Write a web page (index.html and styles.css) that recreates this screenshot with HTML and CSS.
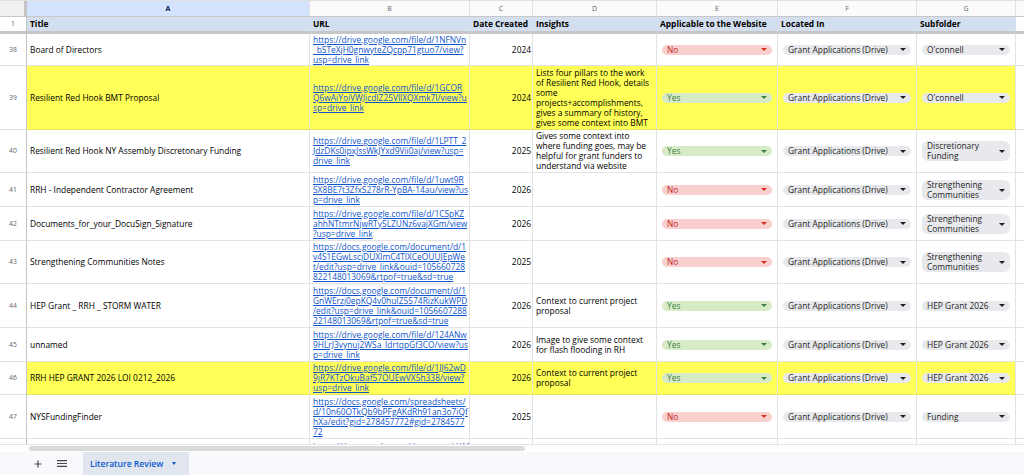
FILE: index.html
```html
<!DOCTYPE html>
<html lang="en">
<head>
<meta charset="utf-8">
<title>Literature Review</title>
<link rel="stylesheet" href="styles.css">
</head>
<body>
<main class="sheet">
  <div class="row letters">
    <div class="cell corner"></div>
    <div class="cell sel">A</div>
    <div class="cell">B</div>
    <div class="cell">C</div>
    <div class="cell">D</div>
    <div class="cell">E</div>
    <div class="cell">F</div>
    <div class="cell">G</div>
    <div class="cell"></div>
  </div>

  <div class="row head">
    <div class="cell rn">1</div>
    <div class="cell">Title</div>
    <div class="cell">URL</div>
    <div class="cell">Date Created</div>
    <div class="cell">Insights</div>
    <div class="cell">Applicable to the Website</div>
    <div class="cell">Located In</div>
    <div class="cell">Subfolder</div>
    <div class="cell blank"></div>
  </div>

  <div class="row h32">
    <div class="cell rn">38</div>
    <div class="cell">Board of Directors</div>
    <div class="cell"><a href="#">https://drive.google.com/file/d/1NFNVn<br>_bSTeXjH0gnwyteZQcpp71gtuo7/view?<br>usp=drive_link</a></div>
    <div class="cell num">2024</div>
    <div class="cell"></div>
    <div class="cell chipcell"><span class="chip no">No<i class="caret"></i></span></div>
    <div class="cell chipcell"><span class="chip grey">Grant Applications (Drive)<i class="caret"></i></span></div>
    <div class="cell chipcell"><span class="chip grey">O'connell<i class="caret"></i></span></div>
    <div class="cell blank"></div>
  </div>

  <div class="row h64 hl">
    <div class="cell rn">39</div>
    <div class="cell">Resilient Red Hook BMT Proposal</div>
    <div class="cell"><a href="#">https://drive.google.com/file/d/1GCOR<br>Q6wAiYoiVWJicdIZ25VllXQXmk7l/view?u<br>sp=drive_link</a></div>
    <div class="cell num">2024</div>
    <div class="cell"><span>Lists four pillars to the work<br>of Resilient Red Hook, details<br>some<br>projects+accomplishments,<br>gives a summary of history,<br>gives some context into BMT</span></div>
    <div class="cell chipcell"><span class="chip yes">Yes<i class="caret"></i></span></div>
    <div class="cell chipcell"><span class="chip grey">Grant Applications (Drive)<i class="caret"></i></span></div>
    <div class="cell chipcell"><span class="chip grey">O'connell<i class="caret"></i></span></div>
    <div class="cell blank"></div>
  </div>

  <div class="row h43">
    <div class="cell rn">40</div>
    <div class="cell">Resilient Red Hook NY Assembly Discretonary Funding</div>
    <div class="cell"><a href="#">https://drive.google.com/file/d/1LPTT_2<br>JdzDKs0ipxJssWkJYxd9Vii0aj/view?usp=<br>drive_link</a></div>
    <div class="cell num">2025</div>
    <div class="cell"><span>Gives some context into<br>where funding goes, may be<br>helpful for grant funders to<br>understand via website</span></div>
    <div class="cell chipcell"><span class="chip yes">Yes<i class="caret"></i></span></div>
    <div class="cell chipcell"><span class="chip grey">Grant Applications (Drive)<i class="caret"></i></span></div>
    <div class="cell chipcell"><span class="chip grey tall">Discretionary<br>Funding<i class="caret"></i></span></div>
    <div class="cell blank"></div>
  </div>

  <div class="row h34">
    <div class="cell rn">41</div>
    <div class="cell">RRH - Independent Contractor Agreement</div>
    <div class="cell"><a href="#">https://drive.google.com/file/d/1uwt9R<br>SX8BE7t3ZfxS278rR-YpBA-14au/view?us<br>p=drive_link</a></div>
    <div class="cell num">2026</div>
    <div class="cell"></div>
    <div class="cell chipcell"><span class="chip no">No<i class="caret"></i></span></div>
    <div class="cell chipcell"><span class="chip grey">Grant Applications (Drive)<i class="caret"></i></span></div>
    <div class="cell chipcell"><span class="chip grey tall">Strengthening<br>Communities<i class="caret"></i></span></div>
    <div class="cell blank"></div>
  </div>

  <div class="row h34">
    <div class="cell rn">42</div>
    <div class="cell">Documents_for_your_DocuSign_Signature</div>
    <div class="cell"><a href="#">https://drive.google.com/file/d/1CSpKZ<br>ahhNTtmrNjwRTy5LZUNz6vajXGm/view<br>?usp=drive_link</a></div>
    <div class="cell num">2026</div>
    <div class="cell"></div>
    <div class="cell chipcell"><span class="chip no">No<i class="caret"></i></span></div>
    <div class="cell chipcell"><span class="chip grey">Grant Applications (Drive)<i class="caret"></i></span></div>
    <div class="cell chipcell"><span class="chip grey tall">Strengthening<br>Communities<i class="caret"></i></span></div>
    <div class="cell blank"></div>
  </div>

  <div class="row h43">
    <div class="cell rn">43</div>
    <div class="cell">Strengthening Communities Notes</div>
    <div class="cell"><a href="#">https://docs.google.com/document/d/1<br>v4S1EGwLscjDUXImC4TlXCeOUUJEpWe<br>t/edit?usp=drive_link&amp;ouid=105660728<br>822148013069&amp;rtpof=true&amp;sd=true</a></div>
    <div class="cell num">2025</div>
    <div class="cell"></div>
    <div class="cell chipcell"><span class="chip no">No<i class="caret"></i></span></div>
    <div class="cell chipcell"><span class="chip grey">Grant Applications (Drive)<i class="caret"></i></span></div>
    <div class="cell chipcell"><span class="chip grey tall">Strengthening<br>Communities<i class="caret"></i></span></div>
    <div class="cell blank"></div>
  </div>

  <div class="row h44">
    <div class="cell rn">44</div>
    <div class="cell">HEP Grant _ RRH _ STORM WATER</div>
    <div class="cell"><a href="#">https://docs.google.com/document/d/1<br>GnWErzj0epKQ4v0huIZ5574RizKukWPD<br>/edit?usp=drive_link&amp;ouid=1056607288<br>22148013069&amp;rtpof=true&amp;sd=true</a></div>
    <div class="cell num">2026</div>
    <div class="cell"><span>Context to current project<br>proposal</span></div>
    <div class="cell chipcell"><span class="chip yes">Yes<i class="caret"></i></span></div>
    <div class="cell chipcell"><span class="chip grey">Grant Applications (Drive)<i class="caret"></i></span></div>
    <div class="cell chipcell"><span class="chip grey">HEP Grant 2026<i class="caret"></i></span></div>
    <div class="cell blank"></div>
  </div>

  <div class="row h34">
    <div class="cell rn">45</div>
    <div class="cell">unnamed</div>
    <div class="cell"><a href="#">https://drive.google.com/file/d/124ANw<br>9HLrJ3vynuj2WSa_IdrtqpGf3CO/view?us<br>p=drive_link</a></div>
    <div class="cell num">2026</div>
    <div class="cell"><span>Image to give some context<br>for flash flooding in RH</span></div>
    <div class="cell chipcell"><span class="chip yes">Yes<i class="caret"></i></span></div>
    <div class="cell chipcell"><span class="chip grey">Grant Applications (Drive)<i class="caret"></i></span></div>
    <div class="cell chipcell"><span class="chip grey">HEP Grant 2026<i class="caret"></i></span></div>
    <div class="cell blank"></div>
  </div>

  <div class="row h33 hl">
    <div class="cell rn">46</div>
    <div class="cell">RRH HEP GRANT 2026 LOI 0212_2026</div>
    <div class="cell"><a href="#">https://drive.google.com/file/d/1JJ62wD<br>9jR7KTzOkuBaf57OUEwVX5h338/view?<br>usp=drive_link</a></div>
    <div class="cell num">2026</div>
    <div class="cell"><span>Context to current project<br>proposal</span></div>
    <div class="cell chipcell"><span class="chip yes">Yes<i class="caret"></i></span></div>
    <div class="cell chipcell"><span class="chip grey">Grant Applications (Drive)<i class="caret"></i></span></div>
    <div class="cell chipcell"><span class="chip grey">HEP Grant 2026<i class="caret"></i></span></div>
    <div class="cell blank"></div>
  </div>

  <div class="row h44">
    <div class="cell rn">47</div>
    <div class="cell">NYSFundingFinder</div>
    <div class="cell"><a href="#">https://docs.google.com/spreadsheets/<br>d/10n60OTkQb9bPFgAKdRh91an3o7iQf<br>hXa/edit?gid=278457772#gid=2784577<br>72</a></div>
    <div class="cell num">2025</div>
    <div class="cell"></div>
    <div class="cell chipcell"><span class="chip no">No<i class="caret"></i></span></div>
    <div class="cell chipcell"><span class="chip grey">Grant Applications (Drive)<i class="caret"></i></span></div>
    <div class="cell chipcell"><span class="chip grey">Funding<i class="caret"></i></span></div>
    <div class="cell blank"></div>
  </div>

  <div class="row h44 partial">
    <div class="cell rn"></div>
    <div class="cell"></div>
    <div class="cell"><a href="#">https://docs.google.com/document/d/1f</a></div>
    <div class="cell num"></div>
    <div class="cell"></div>
    <div class="cell"></div>
    <div class="cell"></div>
    <div class="cell"></div>
    <div class="cell blank"></div>
  </div>
</main>

<div class="hscroll">
  <div class="hscroll-gutter"></div>
  <div class="hscroll-thumb"></div>
</div>

<footer class="tabbar">
  <button class="tb-btn" aria-label="Add sheet">
    <svg width="8" height="8" viewBox="0 0 8 8"><path d="M4 0.5v7M0.5 4h7" stroke="#444746" stroke-width="1.2" fill="none"/></svg>
  </button>
  <button class="tb-btn" aria-label="All sheets">
    <svg width="10" height="7" viewBox="0 0 10 7"><path d="M0 0.6h10M0 3.5h10M0 6.4h10" stroke="#444746" stroke-width="1.1" fill="none"/></svg>
  </button>
  <div class="tab">Literature Review<i class="tab-caret"></i></div>
</footer>
</body>
</html>
```

FILE: styles.css
```css
* { box-sizing: border-box; }

html, body {
  margin: 0;
  padding: 0;
  background: #ffffff;
}

body {
  width: 1024px;
  height: 475px;
  overflow: hidden;
  font-family: "Open Sans", "Liberation Sans", sans-serif;
  font-size: 8.4px;
  line-height: 10px;
  color: #000;
}

.sheet {
  height: 444px;
  overflow: hidden;
  border-top: 1px solid #e1e1e1;
}

.row {
  display: grid;
  grid-template-columns: 27px 283px 160px 63px 124px 121px 139px 99px 40px;
  width: 1056px;
}

.cell {
  display: flex;
  align-items: center;
  padding: 0 3px;
  overflow: hidden;
  white-space: nowrap;
  border-right: 1px solid #e2e2e2;
  border-bottom: 1px solid #e2e2e2;
}

.cell a {
  color: #1155cc;
  text-decoration: underline;
}

/* partially visible last row: its first text line peeks in at the bottom */
.partial .cell {
  align-items: flex-start;
  padding-top: 3px;
}

/* column letters */
.letters {
  height: 16px;
}
.letters .cell {
  justify-content: center;
  font-size: 7px;
  color: #5f6368;
  background: #fbfbfb;
  border-bottom: 1px solid #c8c8c8;
}
.letters .corner {
  background: #f1f1f1;
  border-right: 3px solid #c4c4c4;
}
.letters .sel {
  background: #d3e3fd;
  color: #041e49;
  font-weight: 700;
}

/* header row */
.head {
  height: 17px;
}
.head .cell {
  background: #d3dfee;
  font-weight: 700;
  border-bottom: 3px solid #c6c6c6;
  border-right-color: #d3dfee;
}
.head .cell.blank {
  background: #ffffff;
  border-right-color: #e2e2e2;
}
.head .rn {
  background: #ffffff;
  font-weight: 400;
  border-right: 1px solid #c4c4c4;
}

/* row numbers */
.rn {
  justify-content: center;
  font-size: 6.8px;
  color: #5f6368;
  background: #ffffff;
  border-right: 1px solid #c4c4c4;
}

.h32 { height: 32px; }
.h33 { height: 33px; }
.h34 { height: 34px; }
.h43 { height: 43px; }
.h44 { height: 44px; }
.h64 { height: 64px; }

.hl .cell:not(.rn):not(.blank) {
  background: #ffff57;
  border-bottom-color: #e6e65a;
}

.num {
  justify-content: flex-end;
  padding-right: 1px;
}

/* chips */
.chipcell {
  padding: 0 5px;
}
.chip {
  flex: 1;
  display: flex;
  align-items: center;
  justify-content: space-between;
  height: 10px;
  padding: 0 5px 0 5px;
  border-radius: 5px;
  line-height: 10px;
}
.chip.tall {
  display: block;
  position: relative;
  height: 20px;
  border-radius: 6px;
  padding-top: 0;
}
.chip.tall .caret {
  position: absolute;
  right: 5px;
  top: 9px;
}
.chip.no {
  background: #f8d0cd;
  color: #c5221f;
}
.chip.yes {
  background: #d6ebc6;
  color: #3c7e44;
}
.chip.grey {
  background: #e8e9ec;
  color: #1f1f1f;
}

.caret {
  width: 0;
  height: 0;
  border-left: 3px solid transparent;
  border-right: 3px solid transparent;
  border-top: 3px solid currentColor;
}
.chip.grey .caret {
  border-top-color: #202124;
}
.chip.no .caret { border-top-color: #d93025; }
.chip.yes .caret { border-top-color: #3c7e44; }

/* horizontal scrollbar */
.hscroll {
  height: 8px;
  display: flex;
  align-items: center;
  border-top: 1px solid #e3e3e3;
  background: #ffffff;
}
.hscroll-gutter {
  width: 29px;
  height: 100%;
}
.hscroll-thumb {
  width: 496px;
  height: 5px;
  border-radius: 3px;
  background: #dadada;
}

/* tab bar */
.tabbar {
  height: 23px;
  display: flex;
  align-items: stretch;
  background: #f8f9fc;
  padding-left: 26px;
}
.tb-btn {
  width: 24px;
  border: 0;
  background: transparent;
  padding: 0;
  display: flex;
  align-items: center;
  justify-content: center;
}
.tab {
  margin-left: 9px;
  width: 106px;
  display: flex;
  align-items: center;
  padding-left: 7px;
  background: #e1e6ee;
  color: #0b57d0;
  font-weight: 600;
  font-size: 8.6px;
}
.tab-caret {
  margin-left: 9px;
  width: 0;
  height: 0;
  border-left: 2.5px solid transparent;
  border-right: 2.5px solid transparent;
  border-top: 3px solid #0b57d0;
}
```
